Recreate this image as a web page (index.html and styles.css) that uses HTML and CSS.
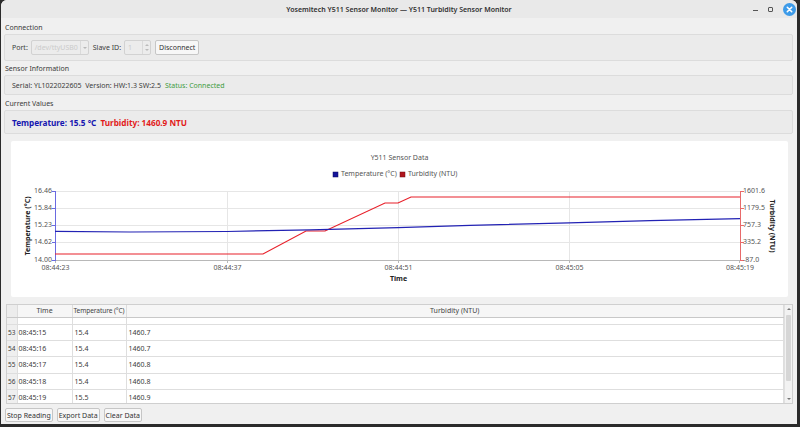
FILE: index.html
```html
<!DOCTYPE html>
<html lang="en">
<head>
  <meta charset="UTF-8">
  <title>Yosemitech Y511 Sensor Monitor</title>
  <link rel="stylesheet" href="styles.css">
</head>
<body>
  <div class="window">
    <div class="titlebar">
      <span></span>
      <span class="title">Yosemitech Y511 Sensor Monitor — Y511 Turbidity Sensor Monitor</span>
      <div class="controls">
        <span class="min"></span>
        <span class="max"></span>
        <span class="close">
          <svg width="13" height="13" viewBox="0 0 13 13">
            <circle cx="6.5" cy="6.5" r="6.5" fill="#3d9be9"/>
            <path d="M4.3 4.3 L8.7 8.7 M8.7 4.3 L4.3 8.7" stroke="#fff" stroke-width="1.6" stroke-linecap="round"/>
          </svg>
        </span>
      </div>
    </div>

    <div class="content">
      <div class="group-label">Connection</div>
      <div class="group conn">
        <span class="lbl">Port:</span>
        <div class="combo">
          <span class="combo-text">/dev/ttyUSB0</span>
          <span class="combo-arrow"></span>
        </div>
        <span class="lbl">Slave ID:</span>
        <div class="spin">
          <span class="spin-text">1</span>
          <span class="spin-btns"><i class="up"></i><i class="down"></i></span>
        </div>
        <button class="btn">Disconnect</button>
      </div>

      <div class="group-label">Sensor Information</div>
      <div class="group info">
        <span>Serial: YL1022022605&nbsp; Version: HW:1.3 SW:2.5</span>
        <span class="status">Status: Connected</span>
      </div>

      <div class="group-label">Current Values</div>
      <div class="group values">
        <span class="temp">Temperature: 15.5 °C</span>
        <span class="turb">Turbidity: 1460.9 NTU</span>
      </div>

      <div class="chart">
        <svg width="777" height="156" viewBox="11 140 777 156">
          <text x="399.5" y="157" class="c-title">Y511 Sensor Data</text>
          <rect x="333" y="171" width="5" height="5" fill="#14149a" stroke="#0a0a60" stroke-width="0.5"/>
          <text x="341" y="173.5" class="c-leg">Temperature (°C)</text>
          <rect x="400" y="171" width="5" height="5" fill="#b0141c" stroke="#700a10" stroke-width="0.5"/>
          <text x="408" y="173.5" class="c-leg">Turbidity (NTU)</text>

          <g stroke="#e6e6e6" stroke-width="1">
            <line x1="55" y1="190.5" x2="740" y2="190.5"/>
            <line x1="55" y1="207.5" x2="740" y2="207.5"/>
            <line x1="55" y1="224.5" x2="740" y2="224.5"/>
            <line x1="55" y1="241.5" x2="740" y2="241.5"/>
            <line x1="227.5" y1="190" x2="227.5" y2="259"/>
            <line x1="398.5" y1="190" x2="398.5" y2="259"/>
            <line x1="569.5" y1="190" x2="569.5" y2="259"/>
          </g>
          <line x1="55" y1="259.5" x2="740" y2="259.5" stroke="#b8b8b8"/>
          <g stroke="#b8b8b8">
            <line x1="55.5" y1="259" x2="55.5" y2="262"/>
            <line x1="227.5" y1="259" x2="227.5" y2="262"/>
            <line x1="398.5" y1="259" x2="398.5" y2="262"/>
            <line x1="569.5" y1="259" x2="569.5" y2="262"/>
            <line x1="739.5" y1="259" x2="739.5" y2="262"/>
          </g>

          <line x1="55.5" y1="190" x2="55.5" y2="260" stroke="#6a6ae0"/>
          <g stroke="#6a6ae0">
            <line x1="52" y1="190.5" x2="55" y2="190.5"/>
            <line x1="52" y1="207.5" x2="55" y2="207.5"/>
            <line x1="52" y1="224.5" x2="55" y2="224.5"/>
            <line x1="52" y1="241.5" x2="55" y2="241.5"/>
            <line x1="52" y1="259.5" x2="55" y2="259.5"/>
          </g>
          <line x1="740.5" y1="190" x2="740.5" y2="260" stroke="#e86a6a"/>
          <g stroke="#e86a6a">
            <line x1="741" y1="190.5" x2="744" y2="190.5"/>
            <line x1="741" y1="207.5" x2="744" y2="207.5"/>
            <line x1="741" y1="224.5" x2="744" y2="224.5"/>
            <line x1="741" y1="241.5" x2="744" y2="241.5"/>
            <line x1="741" y1="259.5" x2="744" y2="259.5"/>
          </g>

          <g class="c-tick" text-anchor="end">
            <text x="52" y="190.5">16.46</text>
            <text x="52" y="207.5">15.84</text>
            <text x="52" y="224.5">15.23</text>
            <text x="52" y="241.5">14.62</text>
            <text x="52" y="259.5">14.00</text>
          </g>
          <g class="c-tick" text-anchor="start">
            <text x="743" y="190.5">1601.6</text>
            <text x="743" y="207.5">1179.5</text>
            <text x="743" y="224.5">757.3</text>
            <text x="743" y="241.5">335.2</text>
            <text x="743" y="259.5">-87.0</text>
          </g>
          <g class="c-tick" text-anchor="middle">
            <text x="55.5" y="267">08:44:23</text>
            <text x="227.5" y="267">08:44:37</text>
            <text x="398.5" y="267">08:44:51</text>
            <text x="569.5" y="267">08:45:05</text>
            <text x="740" y="267">08:45:19</text>
          </g>
          <text x="398.5" y="278" class="c-axis">Time</text>
          <text x="28" y="225" class="c-axis" transform="rotate(-90 28 225)">Temperature (°C)</text>
          <text x="772" y="225" class="c-axis" transform="rotate(90 772 225)">Turbidity (NTU)</text>

          <polyline fill="none" stroke="#e8202a" stroke-width="1.2"
            points="55,253 263,253 306,230 325,230 385,202 398,202 411,196 740,196"/>
          <polyline fill="none" stroke="#2222b4" stroke-width="1.2"
            points="55,230.3 130,231 227,230.5 310,228.8 398,226.6 470,224.4 569,221.8 650,219.6 740,217.6"/>
        </svg>
      </div>

      <div class="table-frame">
        <div class="grid">
          <table class="head">
            <colgroup><col class="c-num"><col class="c-time"><col class="c-temp"><col></colgroup>
            <tr><th class="corner"></th><th>Time</th><th class="tight">Temperature (°C)</th><th>Turbidity (NTU)</th></tr>
          </table>
          <div class="rows">
            <table class="body">
              <colgroup><col class="c-num"><col class="c-time"><col class="c-temp"><col></colgroup>
              <tr><td class="num">52</td><td>08:45:14</td><td>15.4</td><td>1460.7</td></tr>
              <tr><td class="num">53</td><td>08:45:15</td><td>15.4</td><td>1460.7</td></tr>
              <tr><td class="num">54</td><td>08:45:16</td><td>15.4</td><td>1460.7</td></tr>
              <tr><td class="num">55</td><td>08:45:17</td><td>15.4</td><td>1460.8</td></tr>
              <tr><td class="num">56</td><td>08:45:18</td><td>15.4</td><td>1460.8</td></tr>
              <tr><td class="num">57</td><td>08:45:19</td><td>15.5</td><td>1460.9</td></tr>
            </table>
          </div>
        </div>
        <div class="scrollbar">
          <span class="sb-arrow up"></span>
          <div class="sb-track"><div class="sb-handle"></div></div>
          <span class="sb-arrow down"></span>
        </div>
      </div>

      <div class="buttons">
        <button class="btn">Stop Reading</button>
        <button class="btn">Export Data</button>
        <button class="btn">Clear Data</button>
      </div>
    </div>
  </div>
</body>
</html>
```

FILE: styles.css
```css
/* Window shell */
* {
  box-sizing: border-box;
}
body {
  margin: 0;
  background: #2b2b2b;
  font-family: "Noto Sans", "DejaVu Sans", sans-serif;
  font-size: 7px;
  color: #3b3b3b;
}
.window {
  width: 796px;
  height: 424px;
  margin-left: 1px;
  background: #f0f0f0;
  border-radius: 6px 6px 0 0;
  overflow: hidden;
  display: flex;
  flex-direction: column;
}
.titlebar {
  height: 18px;
  flex: none;
  background: #e9e9e9;
  display: grid;
  grid-template-columns: 1fr auto 1fr;
  align-items: center;
}
.title {
  font-size: 7px;
  font-weight: 600;
  color: #303030;
}
.controls {
  justify-self: end;
  display: flex;
  align-items: center;
  gap: 10px;
  padding-right: 1px;
}
.min {
  width: 5px;
  height: 1px;
  margin-top: 3px;
  background: #555;
}
.max {
  width: 5px;
  height: 5px;
  border: 1px solid #555;
  border-radius: 1px;
}
.close svg {
  display: block;
}

/* Group boxes */
.content {
  flex: 1;
  display: flex;
  flex-direction: column;
  padding: 4px 4px 0 3px;
}
.group-label {
  line-height: 11px;
  padding-left: 1px;
  color: #3a3a3a;
}
.group-label + .group {
  margin-top: 1px;
}
.group {
  background: #ebebeb;
  border: 1px solid #dcdcdc;
  border-radius: 2px;
  display: flex;
  align-items: center;
  padding-left: 7px;
}
.conn {
  height: 27px;
  margin-bottom: 2px;
}
.info {
  height: 20px;
  margin-bottom: 3px;
}
.values {
  height: 24px;
}
.lbl {
  margin-right: 3px;
}
.combo {
  width: 58px;
  height: 15px;
  border: 1px solid #d2d2d2;
  border-radius: 2px;
  background: #ececec;
  display: flex;
  align-items: center;
  margin-right: 4px;
}
.combo-text {
  flex: 1;
  padding-left: 3px;
  color: #cbcbcb;
}
.combo-arrow {
  width: 8px;
  height: 100%;
  border-left: 1px solid #dadada;
  position: relative;
}
.combo-arrow::after {
  content: "";
  position: absolute;
  left: 2px;
  top: 6px;
  border: 2px solid transparent;
  border-top: 2px solid #b8b8b8;
}
.spin {
  width: 27px;
  height: 15px;
  border: 1px solid #d2d2d2;
  border-radius: 2px;
  background: #ececec;
  display: flex;
  margin-right: 4px;
}
.spin-text {
  flex: 1;
  padding-left: 3px;
  line-height: 13px;
  color: #cbcbcb;
}
.spin-btns {
  width: 8px;
  border-left: 1px solid #dadada;
  display: flex;
  flex-direction: column;
  align-items: center;
  justify-content: center;
  gap: 3px;
}
.spin-btns i {
  width: 0;
  height: 0;
  border: 2px solid transparent;
}
.spin-btns .up {
  border-bottom-color: #bbb;
  border-top-width: 0;
}
.spin-btns .down {
  border-top-color: #bbb;
  border-bottom-width: 0;
}
.btn {
  height: 15px;
  padding: 0 3px;
  background: #f7f7f7;
  border: 1px solid #c6c6c6;
  border-radius: 2px;
  font-family: inherit;
  font-size: 7px;
  color: #333;
}
.info .status {
  margin-left: 4px;
  color: #3f9b3f;
}
.values {
  font-size: 8.2px;
  font-weight: 700;
}
.temp {
  color: #1616b0;
  margin-right: 4px;
}
.turb {
  color: #e21b1b;
}

/* Chart */
.chart {
  margin: 7px 5px 0 7px;
  height: 156px;
  flex: none;
  background: #fff;
  border-radius: 2px;
}
.chart svg {
  display: block;
  font-family: "Noto Sans", "DejaVu Sans", sans-serif;
}
.c-title {
  font-size: 7px;
  fill: #555;
  text-anchor: middle;
  dominant-baseline: middle;
}
.c-leg {
  font-size: 7px;
  fill: #555;
  dominant-baseline: middle;
}
.c-tick text {
  font-size: 7px;
  fill: #555;
  dominant-baseline: middle;
}
.c-axis {
  font-size: 7px;
  font-weight: 700;
  fill: #222;
  text-anchor: middle;
  dominant-baseline: middle;
}

/* Table */
.table-frame {
  margin: 7px 0 0 2px;
  height: 100px;
  flex: none;
  display: flex;
  border: 1px solid #cfcfcf;
  background: #fff;
}
.grid {
  flex: 1;
  overflow: hidden;
}
.grid table {
  width: 100%;
  border-collapse: collapse;
  table-layout: fixed;
}
.c-num {
  width: 10px;
}
.c-time {
  width: 55px;
}
.c-temp {
  width: 54px;
}
.head th {
  height: 12px;
  padding: 0;
  font-weight: 400;
  color: #444;
  background: #f6f6f6;
  border-right: 1px solid #dcdcdc;
  border-bottom: 1px solid #c8c8c8;
  white-space: nowrap;
}
.head th.tight {
  font-size: 6.6px;
  letter-spacing: -0.1px;
}
.head th.corner {
  background: #ececec;
}
.rows {
  height: 86px;
  overflow: hidden;
}
.body {
  margin-top: -9.5px;
}
.body td {
  height: 16.25px;
  padding: 0 0 0 2px;
  border-right: 1px solid #dedede;
  border-bottom: 1px solid #dedede;
  color: #3b3b3b;
  white-space: nowrap;
}
.body td:nth-child(2) {
  padding-left: 1px;
}
.body td.num {
  padding-left: 0;
  background: #efefef;
  font-size: 6.5px;
  text-align: center;
}
.scrollbar {
  width: 8px;
  flex: none;
  display: flex;
  flex-direction: column;
  background: #f2f2f2;
  border-left: 1px solid #e0e0e0;
}
.sb-arrow {
  height: 8px;
  display: flex;
  align-items: center;
  justify-content: center;
}
.sb-arrow::after {
  content: "";
  border: 2px solid transparent;
}
.sb-arrow.up::after {
  border-bottom-color: #777;
  border-top-width: 0;
}
.sb-arrow.down::after {
  border-top-color: #777;
  border-bottom-width: 0;
}
.sb-track {
  flex: 1;
  padding: 2px 1px;
}
.sb-handle {
  height: 66px;
  background: #d6d6d6;
  border-radius: 1px;
}

/* Bottom buttons */
.buttons {
  display: flex;
  gap: 4px;
  margin: 4px 0 0 1px;
}
.buttons .btn {
  height: 14px;
  padding: 0 1px;
}
```
